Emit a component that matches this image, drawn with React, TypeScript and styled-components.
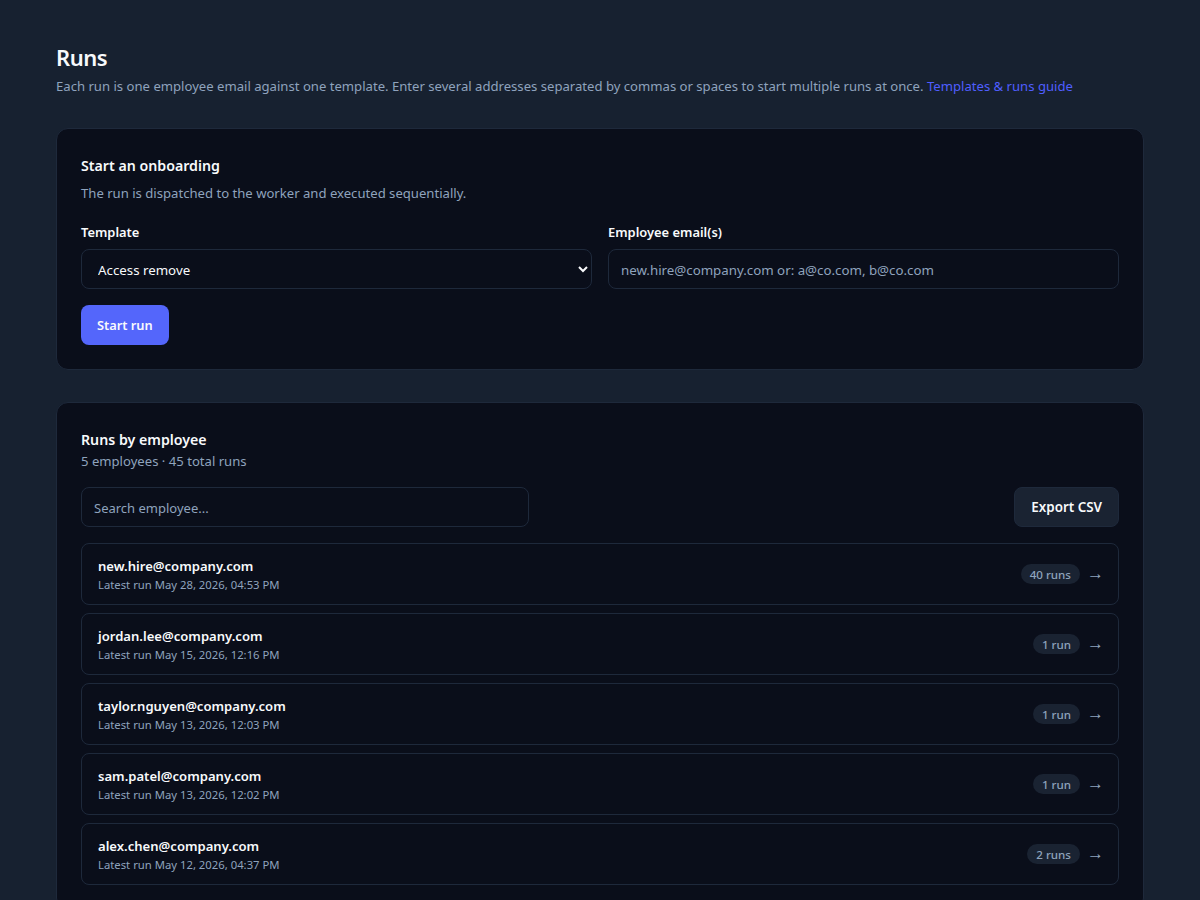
import styled, { createGlobalStyle } from 'styled-components';

const GlobalStyle = createGlobalStyle`
  html, body {
    margin: 0;
    background: #172130;
    font-family: "Noto Sans", "Open Sans", sans-serif;
    color: #f8fafc;
  }
  * {
    box-sizing: border-box;
  }
`;

const Page = styled.main`
  padding: 40px 56px;
  height: 900px;
  overflow: hidden;
`;

const Header = styled.header`
  margin-bottom: 32px;
`;

const Title = styled.h1`
  margin: 0 0 1px;
  font-size: 22px;
  line-height: 35px;
  font-weight: 600;
  letter-spacing: -0.5px;
`;

const Subtitle = styled.p`
  margin: 0;
  font-size: 13.12px;
  line-height: 20px;
  color: #8fa3bd;
`;

const GuideLink = styled.a`
  color: #4f5eff;
  text-decoration: none;
`;

const Card = styled.section`
  background: #0a0e1a;
  border: 1px solid #1e293b;
  border-radius: 12px;
  padding: 24px;
  margin-bottom: 32px;
`;

const CardTitle = styled.h2`
  margin: 0;
  padding-top: 2px;
  font-size: 14.2px;
  line-height: 22px;
  font-weight: 600;
`;

const CardText = styled.p`
  margin: 6px 0 19px;
  font-size: 13.12px;
  line-height: 20px;
  color: #8fa3bd;
`;

const FormGrid = styled.div`
  display: grid;
  grid-template-columns: 1fr 1fr;
  gap: 16px;
  margin-bottom: 16px;
`;

const Field = styled.label`
  display: flex;
  flex-direction: column;
  gap: 7px;
`;

const FieldLabel = styled.span`
  font-size: 12.9px;
  line-height: 20px;
  font-weight: 600;
`;

const Select = styled.select`
  height: 40px;
  padding: 2px 12px 0;
  background: #0a0e1a;
  border: 1px solid #1e293b;
  border-radius: 8px;
  color: #f8fafc;
  font: inherit;
  font-size: 13.3px;
`;

const Input = styled.input<{ $width?: string; $size?: string }>`
  height: 40px;
  width: ${(p) => p.$width || '100%'};
  padding: 2px 12px 0;
  background: #0a0e1a;
  border: 1px solid #1e293b;
  border-radius: 8px;
  color: #f8fafc;
  font: inherit;
  font-size: ${(p) => p.$size || '13.3px'};

  &::placeholder {
    color: #8fa3bd;
    opacity: 1;
  }
`;

const Button = styled.button<{ $primary?: boolean }>`
  height: 40px;
  padding: 0 16px;
  background: ${(p) => (p.$primary ? '#5466fb' : '#1a2332')};
  border: ${(p) => (p.$primary ? 'none' : '1px solid #1e293b')};
  border-radius: 8px;
  color: #f8fafc;
  font: inherit;
  font-size: ${(p) => (p.$primary ? '12.8px' : '13.4px')};
  font-weight: 600;
`;

const ListHead = styled.div`
  margin-bottom: 16px;
`;

const Meta = styled.p`
  margin: 0;
  font-size: 13.12px;
  line-height: 20px;
  color: #8fa3bd;
`;

const Toolbar = styled.div`
  display: flex;
  align-items: center;
  justify-content: space-between;
  margin-bottom: 16px;
`;

const List = styled.div`
  display: flex;
  flex-direction: column;
  gap: 8px;
`;

const Row = styled.div`
  display: flex;
  align-items: center;
  justify-content: space-between;
  height: 62px;
  padding: 0 16px;
  border: 1px solid #1e293b;
  border-radius: 8px;
`;

const RowText = styled.div`
  padding-top: 2px;
`;

const Email = styled.div`
  font-size: 13.08px;
  line-height: 18px;
  font-weight: 600;
`;

const Latest = styled.div`
  font-size: 11.3px;
  line-height: 18px;
  padding-top: 1px;
  color: #8fa3bd;
`;

const RowEnd = styled.div`
  display: flex;
  align-items: center;
  gap: 7px;
  margin-right: -2px;
`;

const Badge = styled.span`
  padding: 0 9px;
  height: 20px;
  line-height: 21px;
  background: #1a2332;
  border-radius: 999px;
  font-size: 11.6px;
  font-weight: 500;
  color: #8fa3bd;
`;

const Arrow = styled.span`
  font-family: "Liberation Sans", sans-serif;
  font-size: 17px;
  line-height: 20px;
  color: #8fa3bd;
`;

const employees = [
  { email: 'new.hire@company.com', latest: 'May 28, 2026, 04:53 PM', runs: '40 runs' },
  { email: 'jordan.lee@company.com', latest: 'May 15, 2026, 12:16 PM', runs: '1 run' },
  { email: 'taylor.nguyen@company.com', latest: 'May 13, 2026, 12:03 PM', runs: '1 run' },
  { email: 'sam.patel@company.com', latest: 'May 13, 2026, 12:02 PM', runs: '1 run' },
  { email: 'alex.chen@company.com', latest: 'May 12, 2026, 04:37 PM', runs: '2 runs' },
];

export default function App() {
  return (
    <>
      <GlobalStyle />
      <Page>
        <Header>
          <Title>Runs</Title>
          <Subtitle>
            Each run is one employee email against one template. Enter several addresses separated by commas or spaces
            to start multiple runs at once. <GuideLink href="#">Templates &amp; runs guide</GuideLink>
          </Subtitle>
        </Header>

        <Card>
          <CardTitle>Start an onboarding</CardTitle>
          <CardText>The run is dispatched to the worker and executed sequentially.</CardText>
          <FormGrid>
            <Field>
              <FieldLabel>Template</FieldLabel>
              <Select defaultValue="access-remove">
                <option value="access-remove">Access remove</option>
              </Select>
            </Field>
            <Field>
              <FieldLabel>Employee email(s)</FieldLabel>
              <Input placeholder="new.hire@company.com or: a@co.com, b@co.com" />
            </Field>
          </FormGrid>
          <Button $primary>Start run</Button>
        </Card>

        <Card>
          <ListHead>
            <CardTitle>Runs by employee</CardTitle>
            <Meta>5 employees · 45 total runs</Meta>
          </ListHead>
          <Toolbar>
            <Input $width="448px" $size="13px" placeholder="Search employee..." />
            <Button>Export CSV</Button>
          </Toolbar>
          <List>
            {employees.map((e) => (
              <Row key={e.email}>
                <RowText>
                  <Email>{e.email}</Email>
                  <Latest>Latest run {e.latest}</Latest>
                </RowText>
                <RowEnd>
                  <Badge>{e.runs}</Badge>
                  <Arrow>→</Arrow>
                </RowEnd>
              </Row>
            ))}
          </List>
        </Card>
      </Page>
    </>
  );
}
